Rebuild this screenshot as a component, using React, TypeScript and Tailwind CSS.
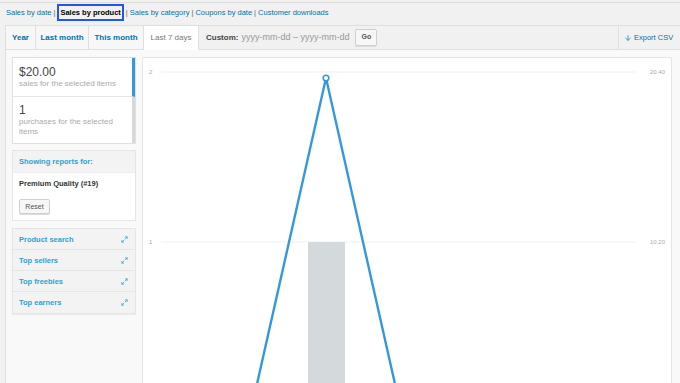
import { Maximize2, ArrowDown } from "lucide-react";

const links = ["Sales by date", "Sales by product", "Sales by category", "Coupons by date", "Customer downloads"];

const tabs = [
  { label: "Year", w: "w-[30px]" },
  { label: "Last month", w: "w-[53px]" },
  { label: "This month", w: "w-[55px]" },
];

const widgets = ["Product search", "Top sellers", "Top freebies", "Top earners"];

function Chart() {
  const k = 69 / 306;
  const px = 183;
  const py = 20;
  const by = 420;
  return (
    <svg width="530" height="330" className="block">
      <line x1="18" y1="14" x2="494" y2="14" stroke="#f0f0f0" strokeWidth="1" />
      <line x1="18" y1="184" x2="494" y2="184" stroke="#f0f0f0" strokeWidth="1" />
      <text x="6" y="16" fontSize="6" fill="#aaa" fontFamily="Liberation Sans, Arial, sans-serif">2</text>
      <text x="6" y="186" fontSize="6" fill="#aaa" fontFamily="Liberation Sans, Arial, sans-serif">1</text>
      <text x="507" y="16" fontSize="6" fill="#aaa" fontFamily="Liberation Sans, Arial, sans-serif">20.40</text>
      <text x="507" y="186" fontSize="6" fill="#aaa" fontFamily="Liberation Sans, Arial, sans-serif">10.20</text>
      <rect x="165" y="184" width="37" height="200" fill="#d4d9dc" />
      <polyline
        points={`${px - k * (by - py)},${by} ${px},${py} ${px + k * (by - py)},${by}`}
        fill="none"
        stroke="#3498db"
        strokeWidth="2.4"
        strokeLinejoin="round"
      />
      <circle cx={px} cy={py} r="2.8" fill="#fff" stroke="#3498db" strokeWidth="1.6" />
    </svg>
  );
}

export default function App() {
  return (
    <div className="w-[680px] h-[383px] overflow-hidden bg-[#f1f1f1] font-['Liberation_Sans',Arial,sans-serif]">
      <div className="h-[3px] border-b border-[#dcdcdc]" />

      <div className="mt-[1px] flex h-[17px] items-center pl-[6px] text-[7.5px] text-[#0073aa]">
        {links.map((l, i) => (
          <span key={l} className="flex items-center">
            {i > 0 && <span className="px-[2px] text-[#666]">|</span>}
            {i === 1 ? (
              <span className="flex h-[17px] items-center border-2 border-[#2255e8] px-[1px] font-bold text-black">{l}</span>
            ) : (
              <span>{l}</span>
            )}
          </span>
        ))}
      </div>

      <div className="mt-[4px] ml-[5px] flex h-[25px] border-t border-l border-[#dfdfdf] text-[8px]">
        {tabs.map((t) => (
          <div
            key={t.label}
            className={`${t.w} flex items-center justify-center border-r border-b border-[#dfdfdf] bg-[#f7f7f7] font-bold text-[#0073aa]`}
          >
            {t.label}
          </div>
        ))}
        <div className="flex w-[55px] items-center justify-center border-r border-[#dfdfdf] bg-white text-[#777]">
          Last 7 days
        </div>
        <div className="flex flex-1 items-center border-b border-[#dfdfdf] bg-[#f1f1f1] pl-[7px]">
          <span className="font-bold text-[#464646]">Custom:</span>
          <span className="ml-[3px] text-[9px] text-[#999]">yyyy-mm-dd – yyyy-mm-dd</span>
          <span className="ml-[6px] flex h-[17px] w-[22px] items-center justify-center rounded-[2px] border border-[#cfcfcf] bg-[#f7f7f7] text-[7px] font-bold text-[#555] shadow-[0_1px_0_#ddd]">
            Go
          </span>
        </div>
        <div className="flex w-[62px] items-center gap-[2px] border-b border-l border-[#dfdfdf] bg-[#f1f1f1] pl-[5px] text-[7.5px] text-[#0073aa]">
          <ArrowDown size={8} strokeWidth={2} />
          <span>Export CSV</span>
        </div>
      </div>

      <div className="ml-[5px] flex h-[333px] border-l border-[#dfdfdf] bg-[#f9f9f9]">
        <div className="w-[136px] shrink-0 px-[6px] pt-[7px]">
          <div className="border border-[#dfdfdf] bg-white">
            <div className="h-[39px] border-r-[3px] border-b border-b-[#e5e5e5] border-r-[#3498db] pl-[6px] pt-[7px]">
              <div className="text-[12px] leading-[14px] text-[#464646]">$20.00</div>
              <div className="text-[8px] leading-[10px] text-[#aaa]">sales for the selected items</div>
            </div>
            <div className="h-[46px] border-r-[3px] border-r-[#d4d9dc] pl-[6px] pt-[6px]">
              <div className="text-[12px] leading-[14px] text-[#464646]">1</div>
              <div className="text-[8px] leading-[10px] text-[#aaa]">
                purchases for the selected
                <br />
                items
              </div>
            </div>
          </div>

          <div className="mt-[6px] border border-[#e5e5e5] bg-white">
            <div className="flex h-[22px] items-center border-b border-[#eee] bg-[#f3f3f3] pl-[6px] text-[7.5px] font-bold text-[#2ea2cc]">
              Showing reports for:
            </div>
            <div className="pl-[6px] pt-[5px] pb-[6px]">
              <div className="text-[7.5px] font-bold text-[#333]">Premium Quality (#19)</div>
              <div className="mt-[10px] flex h-[15px] w-[31px] items-center justify-center rounded-[2px] border border-[#cfcfcf] bg-[#f7f7f7] text-[7px] text-[#555] shadow-[0_1px_0_#ddd]">
                Reset
              </div>
            </div>
          </div>

          <div className="mt-[7px] border border-[#e5e5e5] bg-[#f1f1f1] shadow-[0_1px_1px_rgba(0,0,0,0.05)]">
            {widgets.map((w, i) => (
              <div
                key={w}
                className={`flex h-[21px] items-center justify-between pr-[7px] pl-[6px] text-[7.5px] font-bold text-[#2ea2cc] ${
                  i < widgets.length - 1 ? "border-b border-[#e6e6e6]" : ""
                } bg-[#f3f3f3]`}
              >
                <span>{w}</span>
                <Maximize2 size={7} strokeWidth={2.5} />
              </div>
            ))}
          </div>
        </div>

        <div className="mt-[7px] h-[340px] w-[530px] shrink-0 overflow-hidden rounded-[2px] border border-[#e5e5e5] bg-white">
          <Chart />
        </div>
      </div>
    </div>
  );
}
